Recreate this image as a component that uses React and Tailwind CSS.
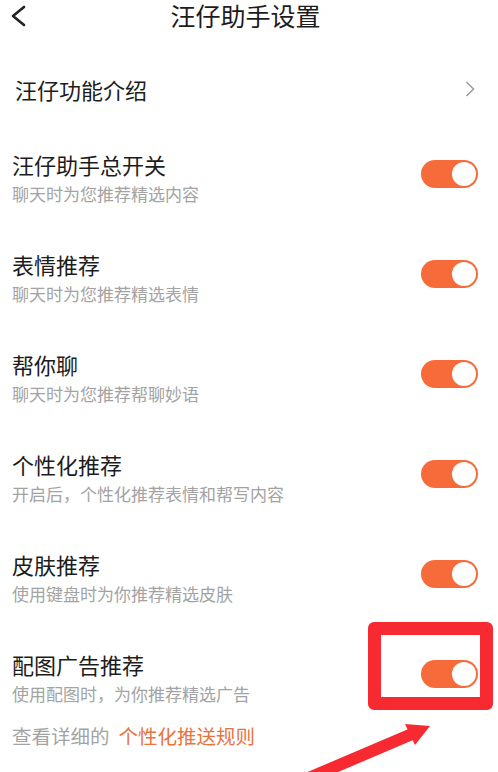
import React from 'react';

const rows = [
  { title: '汪仔助手总开关', desc: '聊天时为您推荐精选内容' },
  { title: '表情推荐', desc: '聊天时为您推荐精选表情' },
  { title: '帮你聊', desc: '聊天时为您推荐帮聊妙语' },
  { title: '个性化推荐', desc: '开启后，个性化推荐表情和帮写内容' },
  { title: '皮肤推荐', desc: '使用键盘时为你推荐精选皮肤' },
  { title: '配图广告推荐', desc: '使用配图时，为你推荐精选广告' },
];

const Toggle = () => (
  <div className="mt-[10px] flex h-[28px] w-[57px] shrink-0 items-center justify-end rounded-full bg-[#f76a39] p-[2px]">
    <div className="h-[24px] w-[24px] rounded-full bg-white" />
  </div>
);

const App = () => {
  return (
    <div
      className="relative h-[772px] w-full overflow-hidden bg-white"
      style={{ fontFamily: '"Noto Sans CJK SC", "Noto Sans", sans-serif' }}
    >
      {/* header */}
      <div className="grid h-[30px] grid-cols-[40px_1fr_40px] items-center">
        <svg width="30" height="30" viewBox="0 0 30 30" fill="none">
          <path d="M24 7 L13 16 L24 25" stroke="#222" strokeWidth="2.6" strokeLinecap="round" strokeLinejoin="round" />
        </svg>
        <h1 className="pr-[7px] text-center text-[25px] leading-[30px] text-[#1c1c1c]">汪仔助手设置</h1>
        <div />
      </div>

      {/* intro */}
      <div className="mt-[45px] flex h-[28px] items-center justify-between pl-[15px] pr-[23px]">
        <p className="text-[22px] leading-[28px] text-[#1c1c1c]">汪仔功能介绍</p>
        <svg width="10" height="16" viewBox="0 0 10 16" fill="none">
          <path d="M1.5 1 L8.5 8 L1.5 15" stroke="#9c9c9c" strokeWidth="1.5" />
        </svg>
      </div>

      {/* switches */}
      <div className="mt-[47px] flex flex-col gap-[45px]">
        {rows.map((row) => (
          <div key={row.title} className="flex items-start justify-between pl-[12px] pr-[20px]">
            <div>
              <p className="text-[22px] leading-[28px] text-[#1c1c1c]">{row.title}</p>
              <p className="mt-[5px] text-[17px] leading-[22px] text-[#a3a3a3]">{row.desc}</p>
            </div>
            <Toggle />
          </div>
        ))}
      </div>

      <p className="mt-[19px] pl-[12px] text-[19.5px] leading-[24px] text-[#a3a3a3]">
        查看详细的
        <span className="ml-[9px] text-[#e9733f]">个性化推送规则</span>
      </p>

      {/* annotation box */}
      <div className="absolute left-[368px] top-[622px] h-[88px] w-[125px] rounded-[6px] border-[13px] border-[#f72a32]" />

      {/* annotation arrow */}
      <svg className="absolute left-0 top-0" width="498" height="772" viewBox="0 0 498 772" fill="none">
        <line x1="290" y1="786" x2="412" y2="734" stroke="#f72a32" strokeWidth="12" />
        <polygon points="430,726 405,724 415,745" fill="#f72a32" />
      </svg>
    </div>
  );
};

export default App;
